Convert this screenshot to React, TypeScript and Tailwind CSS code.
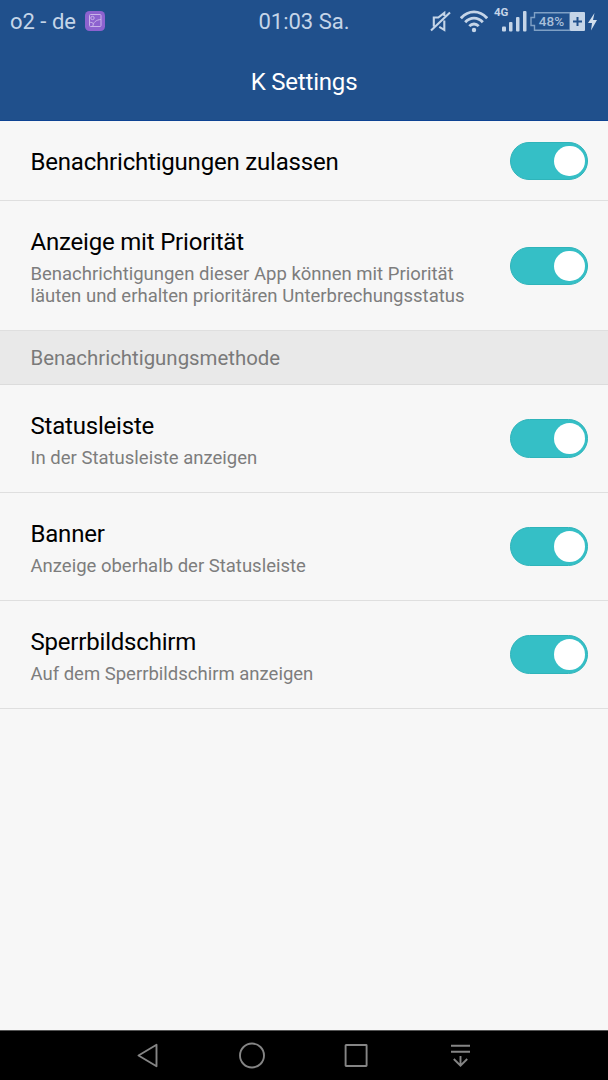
type Setting = {
  title: string;
  description?: string;
};

const generalSettings: Setting[] = [
  { title: 'Benachrichtigungen zulassen' },
  {
    title: 'Anzeige mit Priorität',
    description:
      'Benachrichtigungen dieser App können mit Priorität läuten und erhalten prioritären Unterbrechungsstatus',
  },
];

const methodSettings: Setting[] = [
  { title: 'Statusleiste', description: 'In der Statusleiste anzeigen' },
  { title: 'Banner', description: 'Anzeige oberhalb der Statusleiste' },
  { title: 'Sperrbildschirm', description: 'Auf dem Sperrbildschirm anzeigen' },
];

export default function App() {
  return (
    <div className="flex h-[1080px] w-[608px] flex-col overflow-hidden bg-[#f7f7f7] font-['Roboto',sans-serif]">
      <header className="flex h-[121.4px] shrink-0 flex-col border-b border-[#0e4393] bg-[#20508c]">
        <StatusBar />
        <h1 className="pt-[26px] text-center text-[24px] leading-[30px] tracking-[-0.2px] text-white">K Settings</h1>
      </header>

      <main className="flex-1">
        <SettingList settings={generalSettings} />
        <h2 className="flex h-[53.6px] items-center border-b border-[#dcdcdc] bg-[#e9e9e9] px-[30.5px] pt-[2px] text-[20.4px] text-[#7a7a7a]">
          Benachrichtigungsmethode
        </h2>
        <SettingList settings={methodSettings} />
      </main>

      <NavigationBar />
    </div>
  );
}

function SettingList({ settings }: { settings: Setting[] }) {
  return (
    <ul>
      {settings.map((setting) => (
        <li
          key={setting.title}
          className="flex min-h-[80px] items-center justify-between border-b border-[#dfdfdf] pr-5 pl-[30.5px]"
        >
          <div className={setting.description ? 'w-[450px] pt-[25px] pb-[23px]' : 'pt-[2px]'}>
            <h3 className="text-[24px] leading-[32px] tracking-[-0.2px] text-black">{setting.title}</h3>
            {setting.description && (
              <p className="pt-[5px] text-[18.5px] leading-[22px] text-[#7d7d7d]">{setting.description}</p>
            )}
          </div>
          <Toggle label={setting.title} />
        </li>
      ))}
    </ul>
  );
}

function Toggle({ label }: { label: string }) {
  return (
    <button
      type="button"
      role="switch"
      aria-checked="true"
      aria-label={label}
      className="flex h-[38.6px] w-[78px] shrink-0 items-center justify-end rounded-full border border-[#2fb4ba] bg-[#35bfc6] pr-[2.5px]"
    >
      <span className="size-[30.6px] rounded-full bg-white" />
    </button>
  );
}

function StatusBar() {
  return (
    <div className="grid h-[41px] grid-cols-[1fr_auto_1fr] items-center text-[22px] text-[#c5d5e8]">
      <div className="flex items-center gap-[9px] pt-px pl-[10px]">
        <span>o2 - de</span>
        <svg className="size-5" viewBox="0 0 20 20" fill="none" stroke="#c9b3ea">
          <rect width="20" height="20" rx="4.5" fill="#8d62cf" stroke="none" />
          <rect x="4.500" y="3.500" width="11.500" height="12" rx="1" />
          <circle cx="7.500" cy="7" r="1.700" />
          <path d="M4.500 11.500c1.800-.6 3.300.2 4.200 1.600M7.800 15.500c.4-4.200 3.200-6.700 8.200-7" />
        </svg>
      </div>
      <span className="pt-px">01:03 Sa.</span>
      <StatusIcons />
    </div>
  );
}

function StatusIcons() {
  return (
    <div className="flex h-10 items-start justify-end pr-[11px]">
      <svg className="mt-[8px] h-6 w-[22px]" viewBox="0 0 22 24" fill="none" stroke="#c5d5e8" strokeWidth="2.1">
        <path d="M14.300 7V3.800L8.300 8.500H3.800V17.500M9.300 17.800L14.300 20.800V11.500M1 21.500L20 3.500" />
      </svg>
      <svg className="mt-[9px] ml-[8px] h-[23px] w-7" viewBox="0 0 28 23" fill="none" stroke="#c5d5e8" strokeWidth="2.8">
        <path d="M.9 8.200C8.500-.2 19.500-.2 27.100 8.200M5.200 12.200c5-5.500 12.600-5.500 17.600 0M9.300 16.100c2.700-2.800 6.700-2.800 9.400 0" />
        <circle cx="14" cy="20" r="2.200" fill="#c5d5e8" stroke="none" />
      </svg>
      <div className="flex pt-[5px] pl-[6px]">
        <span className="w-[8px] text-[11.5px] leading-[13px] font-bold whitespace-nowrap">4G</span>
        <svg className="mt-[4px] h-[22px] w-[25px]" viewBox="0 0 25 22" fill="#c5d5e8">
          <rect y="16.500" width="4" height="5" rx="1" />
          <rect x="7" y="12" width="3.500" height="9.500" rx="1" />
          <rect x="14" y="7" width="3.500" height="14.500" rx="1" />
          <rect x="21" y="1" width="3.500" height="20.500" rx="1" />
        </svg>
      </div>
      <svg className="mt-[11px] ml-[3px] h-[19px] w-[55px]" viewBox="0 0 55 19" fill="none" stroke="#7fa0c5" strokeWidth="1.4">
        <path d="M40 .8H4.500V5.500H1V13.500H4.500V18.200H40z" />
        <rect x="40" y="0" width="15" height="19" rx="1" fill="#c5d5e8" stroke="none" />
        <path d="M43 9.500h9M47.500 5v9" stroke="#20508c" strokeWidth="2" />
        <text x="21.500" y="13.600" textAnchor="middle" fontSize="13.500" fontWeight="500" fill="#a9bfd9" stroke="none">
          48%
        </text>
      </svg>
      <svg className="mt-[12px] ml-[3px] h-[18px] w-[9px]" viewBox="0 0 9 18" fill="#d3dfed">
        <path d="M6.500 0L0 10H4L3 17.500L9 7H5z" />
      </svg>
    </div>
  );
}

function NavigationBar() {
  return (
    <nav className="flex h-[50px] shrink-0 items-center justify-center gap-[76px] border-t border-[#555] bg-black">
      <NavIcon label="Zurück">
        <path d="M4.500 13.500L22.500 2.800V24.200z" strokeLinejoin="round" />
      </NavIcon>
      <NavIcon label="Startbildschirm">
        <circle cx="14" cy="13.500" r="12" />
      </NavIcon>
      <NavIcon label="Übersicht">
        <rect x="3.600" y="3" width="21" height="21" rx=".5" />
      </NavIcon>
      <NavIcon label="Benachrichtigungen">
        <path d="M5 3.800h19M5 9.800h19M14.500 14v9.500M7.800 17l6.700 6.700 6.700-6.700" />
      </NavIcon>
    </nav>
  );
}

function NavIcon({ label, children }: { label: string; children: React.ReactNode }) {
  return (
    <button type="button" aria-label={label}>
      <svg className="size-7" viewBox="0 0 28 28" fill="none" stroke="#858585" strokeWidth="1.900">
        {children}
      </svg>
    </button>
  );
}
